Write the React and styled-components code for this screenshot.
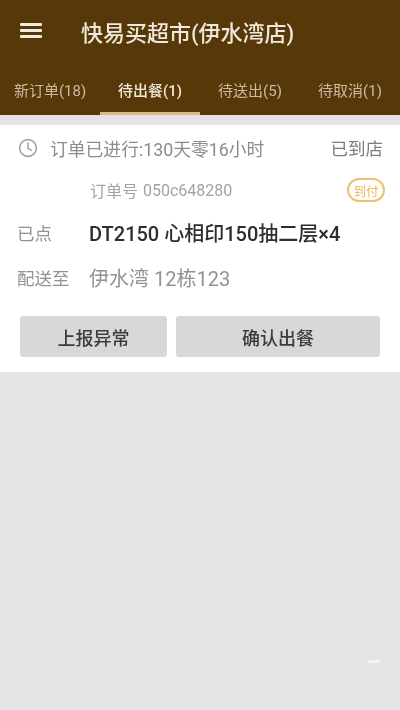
import React from 'react'
import styled, { createGlobalStyle } from 'styled-components'

const GlobalStyle = createGlobalStyle`
  html, body { margin: 0; padding: 0; }
  body {
    background: #e4e4e4;
    font-family: Roboto, "Noto Sans CJK SC", sans-serif;
  }
`

const Page = styled.div`
  position: relative;
  width: 400px;
  height: 710px;
  overflow: hidden;
  background: #e4e4e4;
  filter: blur(0.5px);
`

const Header = styled.header`
  background: #573808;
`

const TitleBar = styled.div`
  display: flex;
  align-items: center;
  height: 64px;
  padding: 0 0 3px 20px;
  box-sizing: border-box;
`

const MenuButton = styled.div`
  display: flex;
  flex-direction: column;
  gap: 3px;
  width: 22px;
  margin-right: 39px;
  span {
    height: 3px;
    background: #f2ebdd;
    border-radius: 1px;
  }
`

const Title = styled.h1`
  margin: 0;
  font-size: 22px;
  font-weight: 500;
  color: #efe8dc;
`

const Tabs = styled.nav`
  display: grid;
  grid-template-columns: repeat(4, 100px);
  height: 51px;
`

const Tab = styled.div`
  display: flex;
  align-items: center;
  justify-content: center;
  padding-top: 2px;
  font-size: 15px;
  font-weight: ${p => (p.$active ? 500 : 400)};
  color: ${p => (p.$active ? '#f0e9db' : '#c9bba4')};
  border-bottom: 3px solid ${p => (p.$active ? '#d8b98a' : 'transparent')};
  box-sizing: border-box;
`

const Gap = styled.div`
  height: 10px;
  background: #e4e4e4;
`

const Card = styled.section`
  background: #fff;
  padding: 0 20px 0 18px;
  height: 247px;
  box-sizing: border-box;
`

const TimeRow = styled.div`
  display: flex;
  align-items: center;
  height: 42px;
  padding-top: 3px;
  box-sizing: border-box;
  color: #8c8c8c;
`

const TimeText = styled.span`
  margin-left: 12px;
  font-size: 17.8px;
`

const Status = styled.span`
  margin-left: auto;
  font-size: 17.5px;
  color: #7d7d7d;
  margin-right: -3px;
`

const OrderRow = styled.div`
  display: flex;
  align-items: center;
  height: 34px;
  padding-left: 72px;
  margin: 6px 0 3px;
  font-size: 16px;
  color: #a3a3a3;
`

const OrderNo = styled.span`
  margin-left: 5px;
`

const PayBadge = styled.span`
  margin-left: auto;
  margin-right: -5px;
  width: 38px;
  height: 24px;
  box-sizing: border-box;
  border: 2px solid #f0c070;
  border-radius: 12px;
  display: flex;
  align-items: center;
  justify-content: center;
  font-size: 12.5px;
  color: #eeb45a;
`

const InfoRow = styled.div`
  display: flex;
  align-items: center;
  height: 45px;
  margin-left: -1px;
`

const InfoLabel = styled.span`
  width: 72px;
  font-size: 17.5px;
  color: #929292;
`

const InfoValue = styled.span`
  font-size: 20px;
  color: ${p => (p.$dark ? '#2e2e2e' : '#929292')};
  font-weight: ${p => (p.$dark ? 500 : 400)};
`

const Actions = styled.div`
  display: flex;
  gap: 9px;
  margin: 16px -1px 0 2px;
`

const ActionButton = styled.button`
  flex: ${p => (p.$wide ? '0 0 204px' : '0 0 147px')};
  height: 41px;
  border: 0;
  border-radius: 3px;
  background: #d7d8d8;
  color: #3c3c3c;
  font-family: inherit;
  font-size: 18px;
  font-weight: 500;
`

const FloatDash = styled.div`
  position: absolute;
  right: 20px;
  top: 660px;
  width: 12px;
  height: 3px;
  background: #f4f4f4;
`

const ClockIcon = () => (
  <svg width="20" height="20" viewBox="0 0 20 20" fill="none" stroke="#a6a6a6" strokeWidth="1.6" strokeLinecap="round">
    <circle cx="10" cy="10" r="8.4" />
    <path d="M10 5v5.4l3.4 2" />
  </svg>
)

export default function App() {
  return (
    <Page>
      <GlobalStyle />
      <Header>
        <TitleBar>
          <MenuButton><span /><span /><span /></MenuButton>
          <Title>快易买超市(伊水湾店)</Title>
        </TitleBar>
        <Tabs>
          <Tab>新订单(18)</Tab>
          <Tab $active>待出餐(1)</Tab>
          <Tab>待送出(5)</Tab>
          <Tab>待取消(1)</Tab>
        </Tabs>
      </Header>
      <Gap />
      <Card>
        <TimeRow>
          <ClockIcon />
          <TimeText>订单已进行:130天零16小时</TimeText>
          <Status>已到店</Status>
        </TimeRow>
        <OrderRow>
          订单号<OrderNo>050c648280</OrderNo>
          <PayBadge>到付</PayBadge>
        </OrderRow>
        <InfoRow>
          <InfoLabel>已点</InfoLabel>
          <InfoValue $dark>DT2150 心相印150抽二层×4</InfoValue>
        </InfoRow>
        <InfoRow>
          <InfoLabel>配送至</InfoLabel>
          <InfoValue>伊水湾 12栋123</InfoValue>
        </InfoRow>
        <Actions>
          <ActionButton>上报异常</ActionButton>
          <ActionButton $wide>确认出餐</ActionButton>
        </Actions>
      </Card>
      <FloatDash />
    </Page>
  )
}
